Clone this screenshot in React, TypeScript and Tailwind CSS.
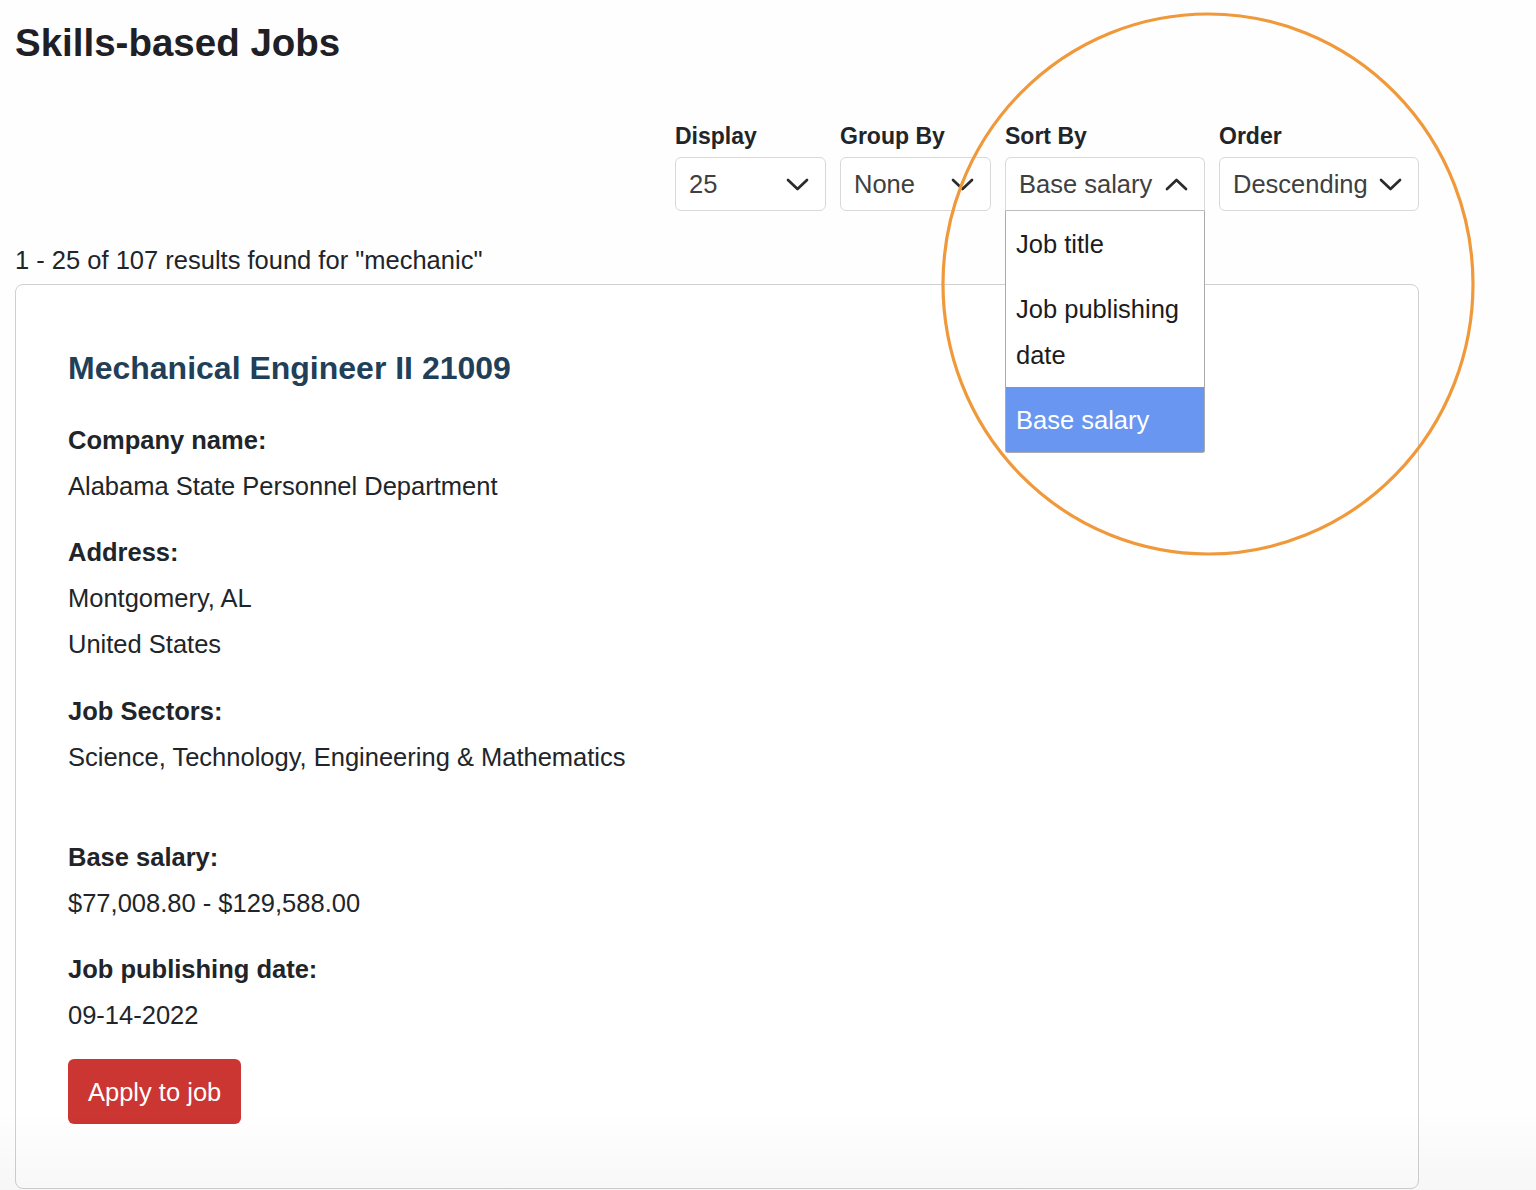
import React from "react";

function Chevron({ up = false }: { up?: boolean }) {
  return (
    <svg width="23" height="13" viewBox="0 0 23 13" fill="none" className="shrink-0">
      <polyline
        points={up ? "2,11 11.5,2 21,11" : "2,2 11.5,11 21,2"}
        stroke="#2b2b2b"
        strokeWidth="2.7"
        strokeLinecap="round"
        strokeLinejoin="round"
      />
    </svg>
  );
}

type Control = { label: string; value: string; width: string; open?: boolean };

const controls: Control[] = [
  { label: "Display", value: "25", width: "w-[151px]" },
  { label: "Group By", value: "None", width: "w-[151px]" },
  { label: "Sort By", value: "Base salary", width: "w-[200px]", open: true },
  { label: "Order", value: "Descending", width: "w-[200px]" },
];

const sortOptions = ["Job title", "Job publishing date", "Base salary"];

function Field({ label, lines, className = "" }: { label: string; lines: string[]; className?: string }) {
  return (
    <div className={className}>
      <div className="font-bold">{label}</div>
      {lines.map((l) => (
        <div key={l}>{l}</div>
      ))}
    </div>
  );
}

export default function App() {
  return (
    <div className="relative min-h-[1190px] overflow-hidden bg-[#fefefe] font-['Liberation_Sans',Arial,sans-serif] text-[#212529]">
      <div className="ml-[15px] w-[1404px]">
        <h1 className="pt-[21px] text-[38.5px] font-bold leading-[44px] text-[#1f2026]">Skills-based Jobs</h1>

        <div className="mt-[56px] flex justify-end gap-[14px]">
          {controls.map((c) => (
            <div key={c.label} className={c.width}>
              <div className="text-[23px] font-bold leading-[30px]">{c.label}</div>
              <div className="relative mt-[6px]">
                <div
                  className={
                    "flex h-[54px] items-center justify-between border border-[#d9d9d9] bg-white pl-[13px] pr-[16px] text-[25.5px] text-[#404040] " +
                    (c.open ? "rounded-t-[6px] border-b-[#bdbdbd]" : "rounded-[6px]")
                  }
                >
                  <span>{c.value}</span>
                  <Chevron up={c.open} />
                </div>
                {c.open && (
                  <div className="absolute left-0 top-full z-10 w-full rounded-b-[3px] border border-t-0 border-[#ababab] bg-white text-[25.5px] leading-[46px] text-[#1c1c1c]">
                    {sortOptions.map((o, i) => (
                      <div
                        key={o}
                        className={
                          "px-[10px] pb-[9px] pt-[10px] " +
                          (i === sortOptions.length - 1 ? "bg-[#6896f0] text-white" : "")
                        }
                      >
                        {o}
                      </div>
                    ))}
                  </div>
                )}
              </div>
            </div>
          ))}
        </div>

        <div className="mt-[34px] text-[25.5px] leading-[30px]">1 - 25 of 107 results found for "mechanic"</div>

        <div className="mt-[9px] rounded-[8px] border border-[#d0d0d0] bg-white px-[52px] pb-[64px] pt-[60px] text-[25.5px] leading-[46px]">
          <h2 className="text-[32px] font-bold leading-[46px] text-[#213f58]">Mechanical Engineer II 21009</h2>
          <Field className="mt-[26px]" label="Company name:" lines={["Alabama State Personnel Department"]} />
          <Field className="mt-[20px]" label="Address:" lines={["Montgomery, AL", "United States"]} />
          <Field className="mt-[21px]" label="Job Sectors:" lines={["Science, Technology, Engineering & Mathematics"]} />
          <Field className="mt-[54px]" label="Base salary:" lines={["$77,008.80 - $129,588.00"]} />
          <Field className="mt-[20px]" label="Job publishing date:" lines={["09-14-2022"]} />
          <button className="mt-[21px] h-[65px] rounded-[6px] bg-[#cb3532] px-[20px] text-[25.5px] text-white">
            Apply to job
          </button>
        </div>
      </div>

      <div className="pointer-events-none absolute bottom-0 left-0 h-[80px] w-full bg-gradient-to-b from-transparent to-black/[0.03]" />

      <svg className="pointer-events-none absolute left-0 top-0 z-20" width="1536" height="1190">
        <ellipse cx="1208" cy="284" rx="265" ry="270" fill="none" stroke="#f0993b" strokeWidth="3.2" />
      </svg>
    </div>
  );
}
